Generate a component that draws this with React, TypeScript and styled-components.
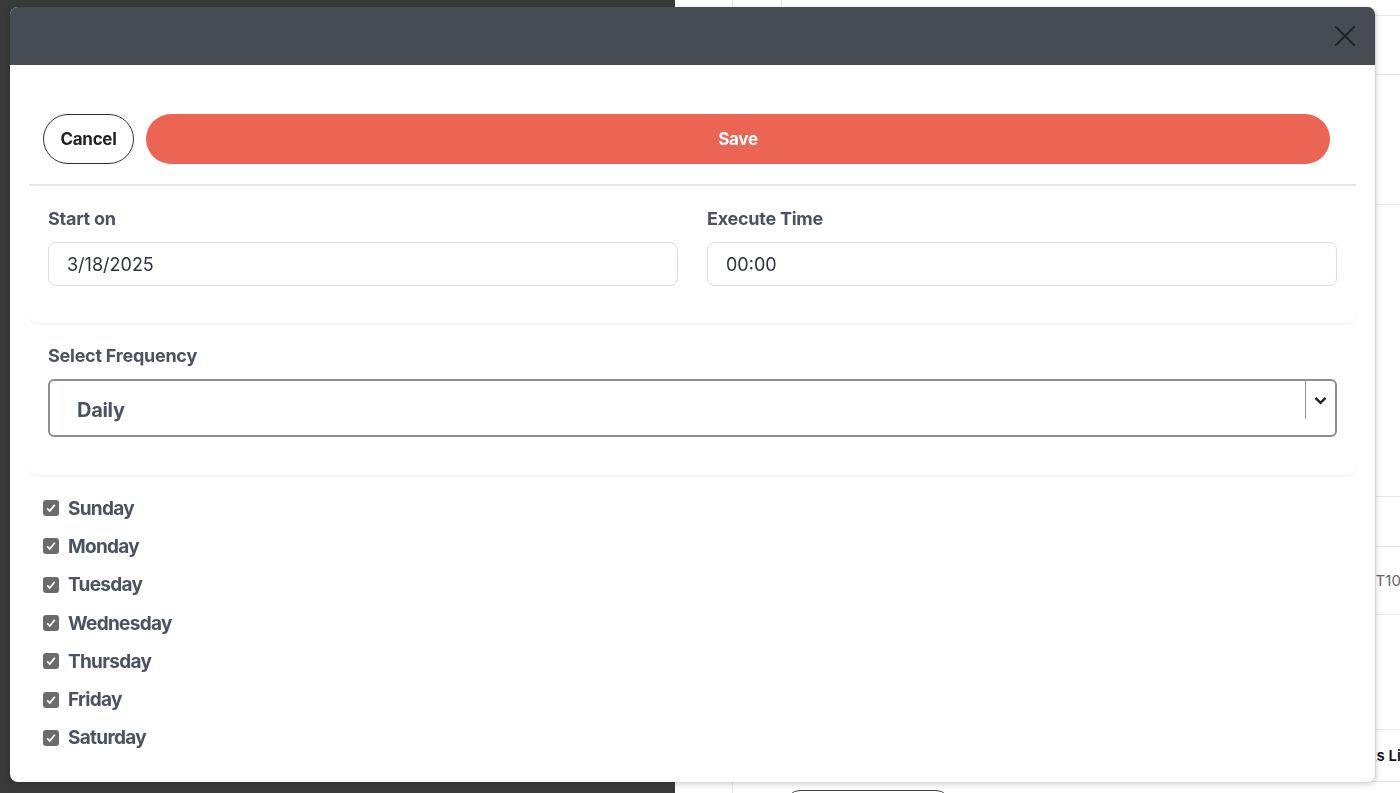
import React from 'react'
import styled, { createGlobalStyle } from 'styled-components'

const GlobalStyle = createGlobalStyle`
    html, body {
        margin: 0;
        padding: 0;
        background: #ffffff;
        font-family: Inter, "Liberation Sans", Arial, sans-serif;
    }
    * {
        box-sizing: border-box;
    }
`

const days = ['Sunday', 'Monday', 'Tuesday', 'Wednesday', 'Thursday', 'Friday', 'Saturday']

// rows of the page that lies behind the modal
const bgRows = [
    { height: 16, text: '' },
    { height: 59, text: '' },
    { height: 130, text: '' },
    { height: 292, text: '' },
    { height: 50, text: '' },
    { height: 68, text: 'ST10' },
    { height: 115, text: '' },
    { height: 52, text: 'ks Li', bold: true },
]

const Page = styled.div`
    width: 1400px;
    height: 793px;
    display: grid;
    grid-template-columns: 675px 1fr;
    overflow: hidden;
`

const Backdrop = styled.div`
    background: #3a3a3a;
`

const BgTable = styled.div`
    display: flex;
    flex-direction: column;
    background: #ffffff;
`

const BgRow = styled.div<{ $h: number }>`
    height: ${(p) => p.$h}px;
    display: grid;
    grid-template-columns: 57px 49px 585px 1fr;
    border-bottom: 1px solid #e6e6e6;
    align-items: center;
`

const BgCell = styled.div<{ $line?: boolean }>`
    height: 100%;
    display: flex;
    align-items: center;
    justify-content: flex-end;
    border-left: ${(p) => (p.$line ? '1px solid #e6e6e6' : 'none')};
`

const BgText = styled.span<{ $bold?: boolean }>`
    font-size: 15px;
    font-weight: ${(p) => (p.$bold ? 600 : 400)};
    color: ${(p) => (p.$bold ? '#111' : '#666')};
    white-space: nowrap;
    padding-right: 1px;
`

const BgFooter = styled.div`
    display: grid;
    grid-template-columns: 57px 1fr;
    height: 40px;
`

const BgPill = styled.div`
    width: 166px;
    height: 30px;
    margin: 8px auto 0 52px;
    border: 1.5px solid #444;
    border-radius: 16px;
    align-self: flex-start;
`

const Modal = styled.div`
    position: fixed;
    top: 7px;
    left: 10px;
    width: 1366px;
    height: 775px;
    background: #ffffff;
    border-radius: 8px;
    border-right: 1px solid #d4d4d4;
    overflow: hidden;
    display: flex;
    flex-direction: column;
    box-shadow: 0 2px 6px rgba(0, 0, 0, 0.2);
`

const Header = styled.div`
    height: 58px;
    flex-shrink: 0;
    background: #474b54;
    display: flex;
    align-items: center;
    justify-content: flex-end;
    padding-right: 19px;
`

const CloseButton = styled.button`
    width: 22px;
    height: 22px;
    padding: 0;
    border: none;
    background: transparent;
    display: flex;
    align-items: center;
    justify-content: center;
    cursor: pointer;
`

const Body = styled.div`
    padding: 0 19px;
    display: flex;
    flex-direction: column;
`

const Actions = styled.div`
    display: flex;
    gap: 12px;
    padding: 49px 26px 20px 14px;
    border-bottom: 2px solid #e6e6e6;
`

const PillButton = styled.button<{ $primary?: boolean }>`
    height: 50px;
    border-radius: 25px;
    font-family: inherit;
    font-size: 17px;
    font-weight: 700;
    letter-spacing: -0.3px;
    cursor: pointer;
    ${(p) =>
        p.$primary
            ? `
        flex: 1;
        background: #ec6453;
        color: #ffffff;
        border: none;
    `
            : `
        width: 91px;
        background: #ffffff;
        color: #1f1f1f;
        border: 1.5px solid #2f2f2f;
    `}
`

const Section = styled.div<{ $top: number; $bottom: number }>`
    padding: ${(p) => p.$top}px 19px ${(p) => p.$bottom}px;
    border-radius: 8px;
    box-shadow: 0 1px 2px rgba(0, 0, 0, 0.07);
`

const TwoCols = styled.div`
    display: grid;
    grid-template-columns: 1fr 1fr;
    gap: 29px;
`

const Field = styled.div`
    display: flex;
    flex-direction: column;
    gap: 12px;
`

const Label = styled.label`
    font-size: 18px;
    line-height: 22px;
    font-weight: 700;
    color: #4b5260;
    letter-spacing: -0.25px;
`

const TextInput = styled.div`
    height: 44px;
    border: 1.5px solid #dcdde0;
    border-radius: 8px;
    padding-left: 18px;
    display: flex;
    align-items: center;
    font-size: 18px;
    color: #2f343c;
`

const Select = styled.div`
    height: 58px;
    border: 2px solid #8a8e95;
    border-radius: 6px;
    display: flex;
    align-items: center;
`

const SelectValue = styled.div`
    flex: 1;
    padding-left: 27px;
    padding-top: 4px;
    font-size: 20px;
    font-weight: 700;
    letter-spacing: -0.3px;
    color: #4b5260;
`

const SelectArrow = styled.div`
    width: 30px;
    height: 38px;
    align-self: flex-start;
    border-left: 1.5px solid #8a8e95;
    display: flex;
    align-items: center;
    justify-content: center;
`

const DayList = styled.div`
    display: flex;
    flex-direction: column;
    padding: 14px 0 0 14px;
`

const DayRow = styled.label`
    height: 38.3px;
    display: flex;
    align-items: center;
    gap: 9px;
    font-size: 19px;
    font-weight: 700;
    color: #4b5260;
    letter-spacing: -0.7px;
`

const Check = styled.span`
    width: 16px;
    height: 16px;
    border-radius: 3px;
    background: #6b6b6d;
    display: flex;
    align-items: center;
    justify-content: center;
`

const App = () => {
    return (
        <>
            <GlobalStyle />
            <Page>
                <Backdrop />
                <BgTable>
                    {bgRows.map((row, index) => (
                        <BgRow key={index} $h={row.height}>
                            <BgCell />
                            <BgCell $line={index === 0} />
                            <BgCell $line={index === 0} />
                            <BgCell>
                                {row.text && <BgText $bold={row.bold}>{row.text}</BgText>}
                            </BgCell>
                        </BgRow>
                    ))}
                    <BgFooter>
                        <BgCell />
                        <BgCell $line>
                            <BgPill />
                        </BgCell>
                    </BgFooter>
                </BgTable>
            </Page>

            <Modal>
                <Header>
                    <CloseButton aria-label="Close">
                        <svg width="22" height="22" viewBox="0 0 22 22">
                            <path d="M2 2 L20 20 M20 2 L2 20" stroke="#222" strokeWidth="2" strokeLinecap="round" />
                        </svg>
                    </CloseButton>
                </Header>
                <Body>
                    <Actions>
                        <PillButton>Cancel</PillButton>
                        <PillButton $primary>Save</PillButton>
                    </Actions>

                    <Section $top={22} $bottom={37}>
                        <TwoCols>
                            <Field>
                                <Label>Start on</Label>
                                <TextInput>3/18/2025</TextInput>
                            </Field>
                            <Field>
                                <Label>Execute Time</Label>
                                <TextInput>00:00</TextInput>
                            </Field>
                        </TwoCols>
                    </Section>

                    <Section $top={22} $bottom={38}>
                        <Field>
                            <Label>Select Frequency</Label>
                            <Select>
                                <SelectValue>Daily</SelectValue>
                                <SelectArrow>
                                    <svg width="13" height="9" viewBox="0 0 13 9">
                                        <path d="M1.5 1.8 L6.5 6.8 L11.5 1.8" fill="none" stroke="#222" strokeWidth="2.4" />
                                    </svg>
                                </SelectArrow>
                            </Select>
                        </Field>
                    </Section>

                    <DayList>
                        {days.map((day) => (
                            <DayRow key={day}>
                                <Check>
                                    <svg width="12" height="12" viewBox="0 0 12 12">
                                        <path d="M2.2 6.4 L4.8 9 L9.8 2.8" fill="none" stroke="#fff" strokeWidth="1.8" />
                                    </svg>
                                </Check>
                                {day}
                            </DayRow>
                        ))}
                    </DayList>
                </Body>
            </Modal>
        </>
    )
}

export default App
